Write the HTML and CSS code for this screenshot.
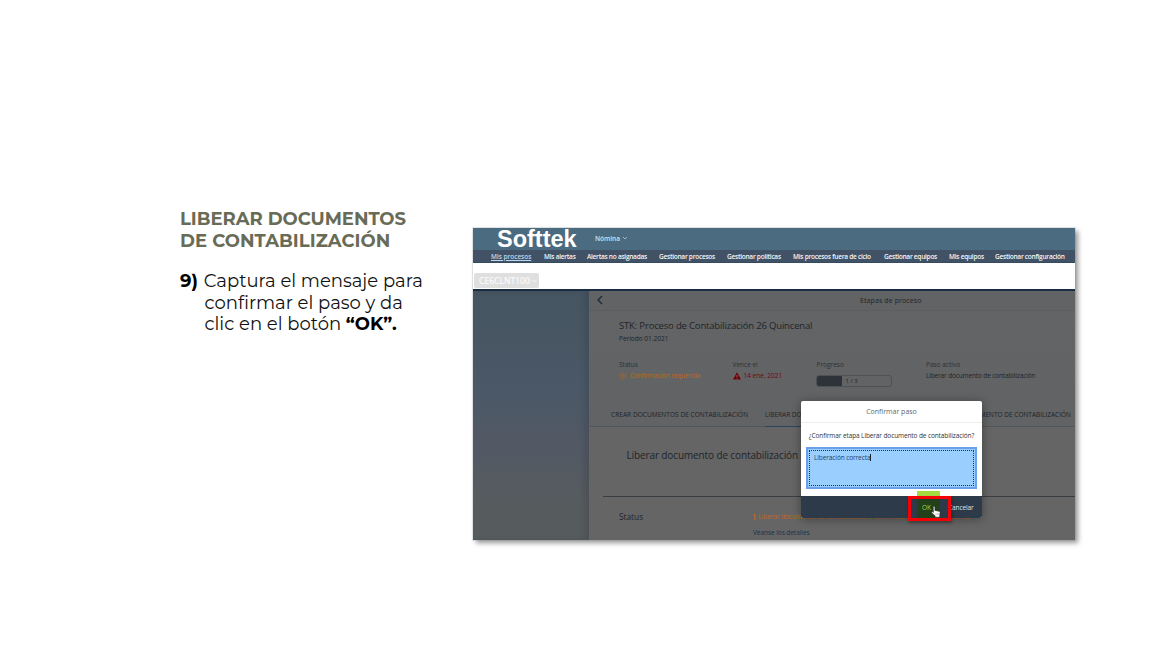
FILE: index.html
```html
<!DOCTYPE html>
<html lang="es">
<head>
<meta charset="utf-8">
<title>Liberar documentos de contabilización</title>
<link rel="stylesheet" href="styles.css">
</head>
<body>
<main class="slide">
  <section class="copy">
    <h1>LIBERAR DOCUMENTOS<br><span class="h-b">DE CONTABILIZACIÓN</span></h1>
    <p><b class="num">9)</b> <span class="l1">Captura el mensaje para</span><br><span class="l2">confirmar el paso y da</span><br><span class="l3">clic en el botón <b>“OK”.</b></span></p>
  </section>
  <section class="app">
    <header class="brandbar"><span class="brand">Softtek</span><span class="area">Nómina</span><svg class="caret" viewBox="0 0 6 4"><path d="M1 1l2 2 2-2" fill="none" stroke="#b5c8d4" stroke-width=".8"/></svg></header>
    <nav class="tabs"><span class="on">Mis procesos</span><span>Mis alertas</span><span>Alertas no asignadas</span><span>Gestionar procesos</span><span>Gestionar políticas</span><span>Mis procesos fuera de ciclo</span><span>Gestionar equipos</span><span>Mis equipos</span><span>Gestionar configuración</span></nav>
    <div class="strip"><span class="client">CE6CLNT100 <svg viewBox="0 0 6 4"><path d="M1 1l2 2 2-2" fill="none" stroke="#fff"/></svg></span></div>
    <div class="body">
      <aside class="side"></aside>
      <div class="content">
        <div class="titlebar"><svg class="back" viewBox="0 0 8 10"><path d="M6 1L2 5l4 4" fill="none" stroke="#1a2938" stroke-width="1.3"/></svg><span>Etapas de proceso</span></div>
        <div class="summary">
          <h2>STK: Proceso de Contabilización 26 Quincenal</h2>
          <div class="period">Período 01.2021</div>
          <div class="facts">
            <div><label>Status</label><span class="orange"><svg class="ico" viewBox="0 0 8 8"><path d="M4 .7L7.3 4 4 7.3.7 4zM4 2.4v3.2" fill="none" stroke="#b5641a" stroke-width=".8"/></svg><span class="conf">Confirmación requerida</span></span></div>
            <div><label>Vence el</label><span class="red"><svg class="ico" viewBox="0 0 8 8"><path d="M4 .3L8 7.6H0z" fill="#6f0007"/><path d="M4 3v2.2M4 6v.8" stroke="#888" stroke-width=".8"/></svg><span class="due">14 ene. 2021</span></span></div>
            <div><label>Progreso</label><div class="meter"><i></i><span>1 / 3</span></div></div>
            <div><label>Paso activo</label><span class="active">Liberar documento de contabilización</span></div>
          </div>
        </div>
        <div class="steps"><span class="s1">CREAR DOCUMENTOS DE CONTABILIZACIÓN</span><span class="s2">LIBERAR DOCUMENTO</span><span class="s3">DOCUMENTO DE CONTABILIZACIÓN</span></div>
        <h3>Liberar documento de contabilización</h3>
        <div class="result"><span class="rs">Status</span><div><div class="warn"><b>!</b><span>Liberar documento de contabilización: Confirmación del paso requerida</span></div><div class="details">Véanse los detalles</div></div></div>
      </div>
    </div>
    <div class="dialog">
      <div class="dtitle">Confirmar paso</div>
      <div class="dbody"><div class="question">¿Confirmar etapa Liberar documento de contabilización?</div><div class="note"><span>Liberación correcta</span></div></div>
      <div class="dfoot"><span class="ok">OK</span><span class="cancel">Cancelar</span></div>
      <div class="mark"></div>
      <svg class="hand" viewBox="0 0 10 12"><path d="M2.2 1c0-.9 1.6-.9 1.7 0v3.4l4 .8c.9.2 1.3.7 1.2 1.5L8.7 9.2v2H4.1V9.8L.8 7C.2 6.2 1 5.4 1.7 5.9l.7.5z" fill="#fff" stroke="#303030" stroke-width=".6"/><path d="M5 7v2M6.4 7v2M7.7 7v2" stroke="#888" stroke-width=".4"/></svg>
    </div>
  </section>
</main>
</body>
</html>
```
FILE: styles.css
```css
*{box-sizing:border-box}
body{margin:0;background:#fff;font-family:"Open Sans","Noto Sans",sans-serif}
.slide{width:1152px;height:648px;display:grid;grid-template-columns:293px 602px;padding:228px 0 0 180px;overflow:hidden}
.copy{font-family:Montserrat,Inter,sans-serif;margin-top:-20px;white-space:nowrap}
h1{margin:0;color:#686b56;font-size:18px;line-height:22px;font-weight:700;letter-spacing:-.04px}
.h-b{letter-spacing:.06px}
.copy p{margin:19px 0 0;font-size:18px;line-height:21.5px;color:#111}
.copy b{color:#000}
.num{display:inline-block;width:19px}
.l2,.l3{margin-left:24.5px}
.app{position:relative;width:602px;height:312px;box-shadow:3px 3px 5px rgba(0,0,0,.42);display:flex;flex-direction:column;white-space:nowrap;outline:1px solid rgba(130,140,145,.2)}
.brandbar{height:22px;background:#4b6c80;display:flex;align-items:center;color:#fff}
.brand{font:700 23.5px/22px "Liberation Sans",sans-serif;margin-left:24px;width:98px;margin-top:-1px}
.area{font-size:6.5px;font-weight:600;color:#d2e0e8;width:27px;margin-top:-2px}
.caret{width:6px;height:4px;margin-top:-3px}
.tabs{height:13px;background:#415266;border-bottom:1px solid #354b60;display:grid;grid-template-columns:53px 43px 72px 68px 66px 91px 65px 46px 72px;padding-left:18px;color:#f4f6f8;font-size:6.5px;line-height:13px;letter-spacing:-.25px;font-weight:600}
.on{color:#b9d8f2;text-decoration:underline;letter-spacing:-.04px}
.strip{height:26px;background:#fff;padding-top:10px}
.client{display:flex;align-items:center;gap:2px;width:65px;height:15px;margin-left:1px;padding-left:5px;border-radius:2px;background:#dfdfdf;color:#fff;font-size:8.6px}
.client svg{width:5px;height:4px;flex:none}
.body{height:251px;border-top:2px solid #1b2d42;display:grid;grid-template-columns:116px 486px;overflow:hidden}
.side{background:linear-gradient(#465562,#4b5867 40%,#535964 65%,#565c5e 85%);box-shadow:inset -5px 0 5px rgba(30,40,48,.16)}
.content{background:#656565;color:#1f2429;overflow:hidden}
.titlebar{height:20px;border-bottom:1px solid #5a5e61;background:#626364;display:flex;align-items:center;padding-left:7px;font-size:7px;letter-spacing:.1px}
.back{width:8px;height:10px;margin-right:256px;margin-top:-1px;flex:none}
.summary{height:96px;padding:7px 0 0 30px;background:linear-gradient(#636465,#616364)}
h2{font-size:9.5px;font-weight:400;line-height:15px;margin:0;letter-spacing:-.17px}
.period{font-size:6.5px;line-height:12px}
.facts{display:grid;grid-template-columns:113.5px 84px 109.5px 150px;margin-top:14px;font-size:6.5px;line-height:11px}
.active{letter-spacing:-.14px}
label{display:block;color:#2e3235;height:11px}
.orange,.red{display:flex;align-items:center;gap:3px;color:#c06a17}
.conf{letter-spacing:-.1px}
.red{color:#76050c}
.ico{width:8px;height:8px}
.meter{width:76px;height:12px;margin-top:5px;margin-left:-1px;border:1px solid #4d5153;border-radius:3px;display:flex;align-items:center;overflow:hidden;font-size:6px}
.meter i{width:25px;height:12px;background:#2d3338;margin-right:4px}
.steps{height:20px;border-bottom:1px solid #51565b;display:grid;grid-template-columns:154px 196px 120px;padding-left:22px;font-size:6.5px;line-height:16px;background:#626364}
.s1{letter-spacing:.06px}
.s2{border-bottom:1px solid #29445c;width:100px;height:20px}
h3{font-size:10px;font-weight:400;line-height:17px;margin:20px 0 0;padding-left:37.5px;letter-spacing:-.12px}
.result{height:60px;margin:32px 0 0 14px;padding:11px 0 0 16px;border-top:1px solid #393e42;display:grid;grid-template-columns:134px 300px}
.rs{font-size:8.3px;line-height:17px}
.warn{display:flex;gap:3px;color:#c06a17;font-size:6.5px;line-height:17px;letter-spacing:-.08px}
.warn b{font-size:9px}
.details{color:#17344e;font-size:6.5px;line-height:16px;letter-spacing:-.05px}
.dialog{position:absolute;left:328px;top:173px;width:181px;height:117px;border-radius:2px;box-shadow:0 1px 10px rgba(0,0,0,.38);background:#fff;color:#333}
.dtitle{height:22px;border-bottom:1px solid #eee;text-align:center;font-size:7px;line-height:22px;color:#666}
.dbody{height:73px;padding:6px 5px 0}
.question{text-align:center;font-size:6.5px;line-height:13px;letter-spacing:-.11px}
.note{height:42px;margin-top:5px;border:2px solid #6c9fe9;background:#99ceff;display:flex;padding:1px}
.note span{flex:1;border:1px dotted #1b344d;padding:0 0 0 4px;font-size:6.5px;line-height:13px;color:#24425f;letter-spacing:-.1px}
.note span::after{content:"";display:inline-block;height:7px;border-right:1px solid #222;vertical-align:-1px}
.dfoot{height:22px;background:#2c3a49;border-radius:0 0 2px 2px;display:flex;align-items:center;font-size:6.5px;color:#dce6ef}
.ok{width:23px;height:27px;margin:-5px 0 0 116px;padding:0 0 0 5px;line-height:33px;color:#a2d94c;background:linear-gradient(#a5dc40 0 5px,#224019 5px)}
.cancel{margin-left:8px;letter-spacing:-.1px}
.mark{position:absolute;left:107px;top:95px;width:43px;height:25px;border:3px solid #f40007;box-shadow:1px 2px 3px rgba(0,0,0,.35)}
.hand{position:absolute;left:130px;top:105px;width:10px;height:12px}
```
